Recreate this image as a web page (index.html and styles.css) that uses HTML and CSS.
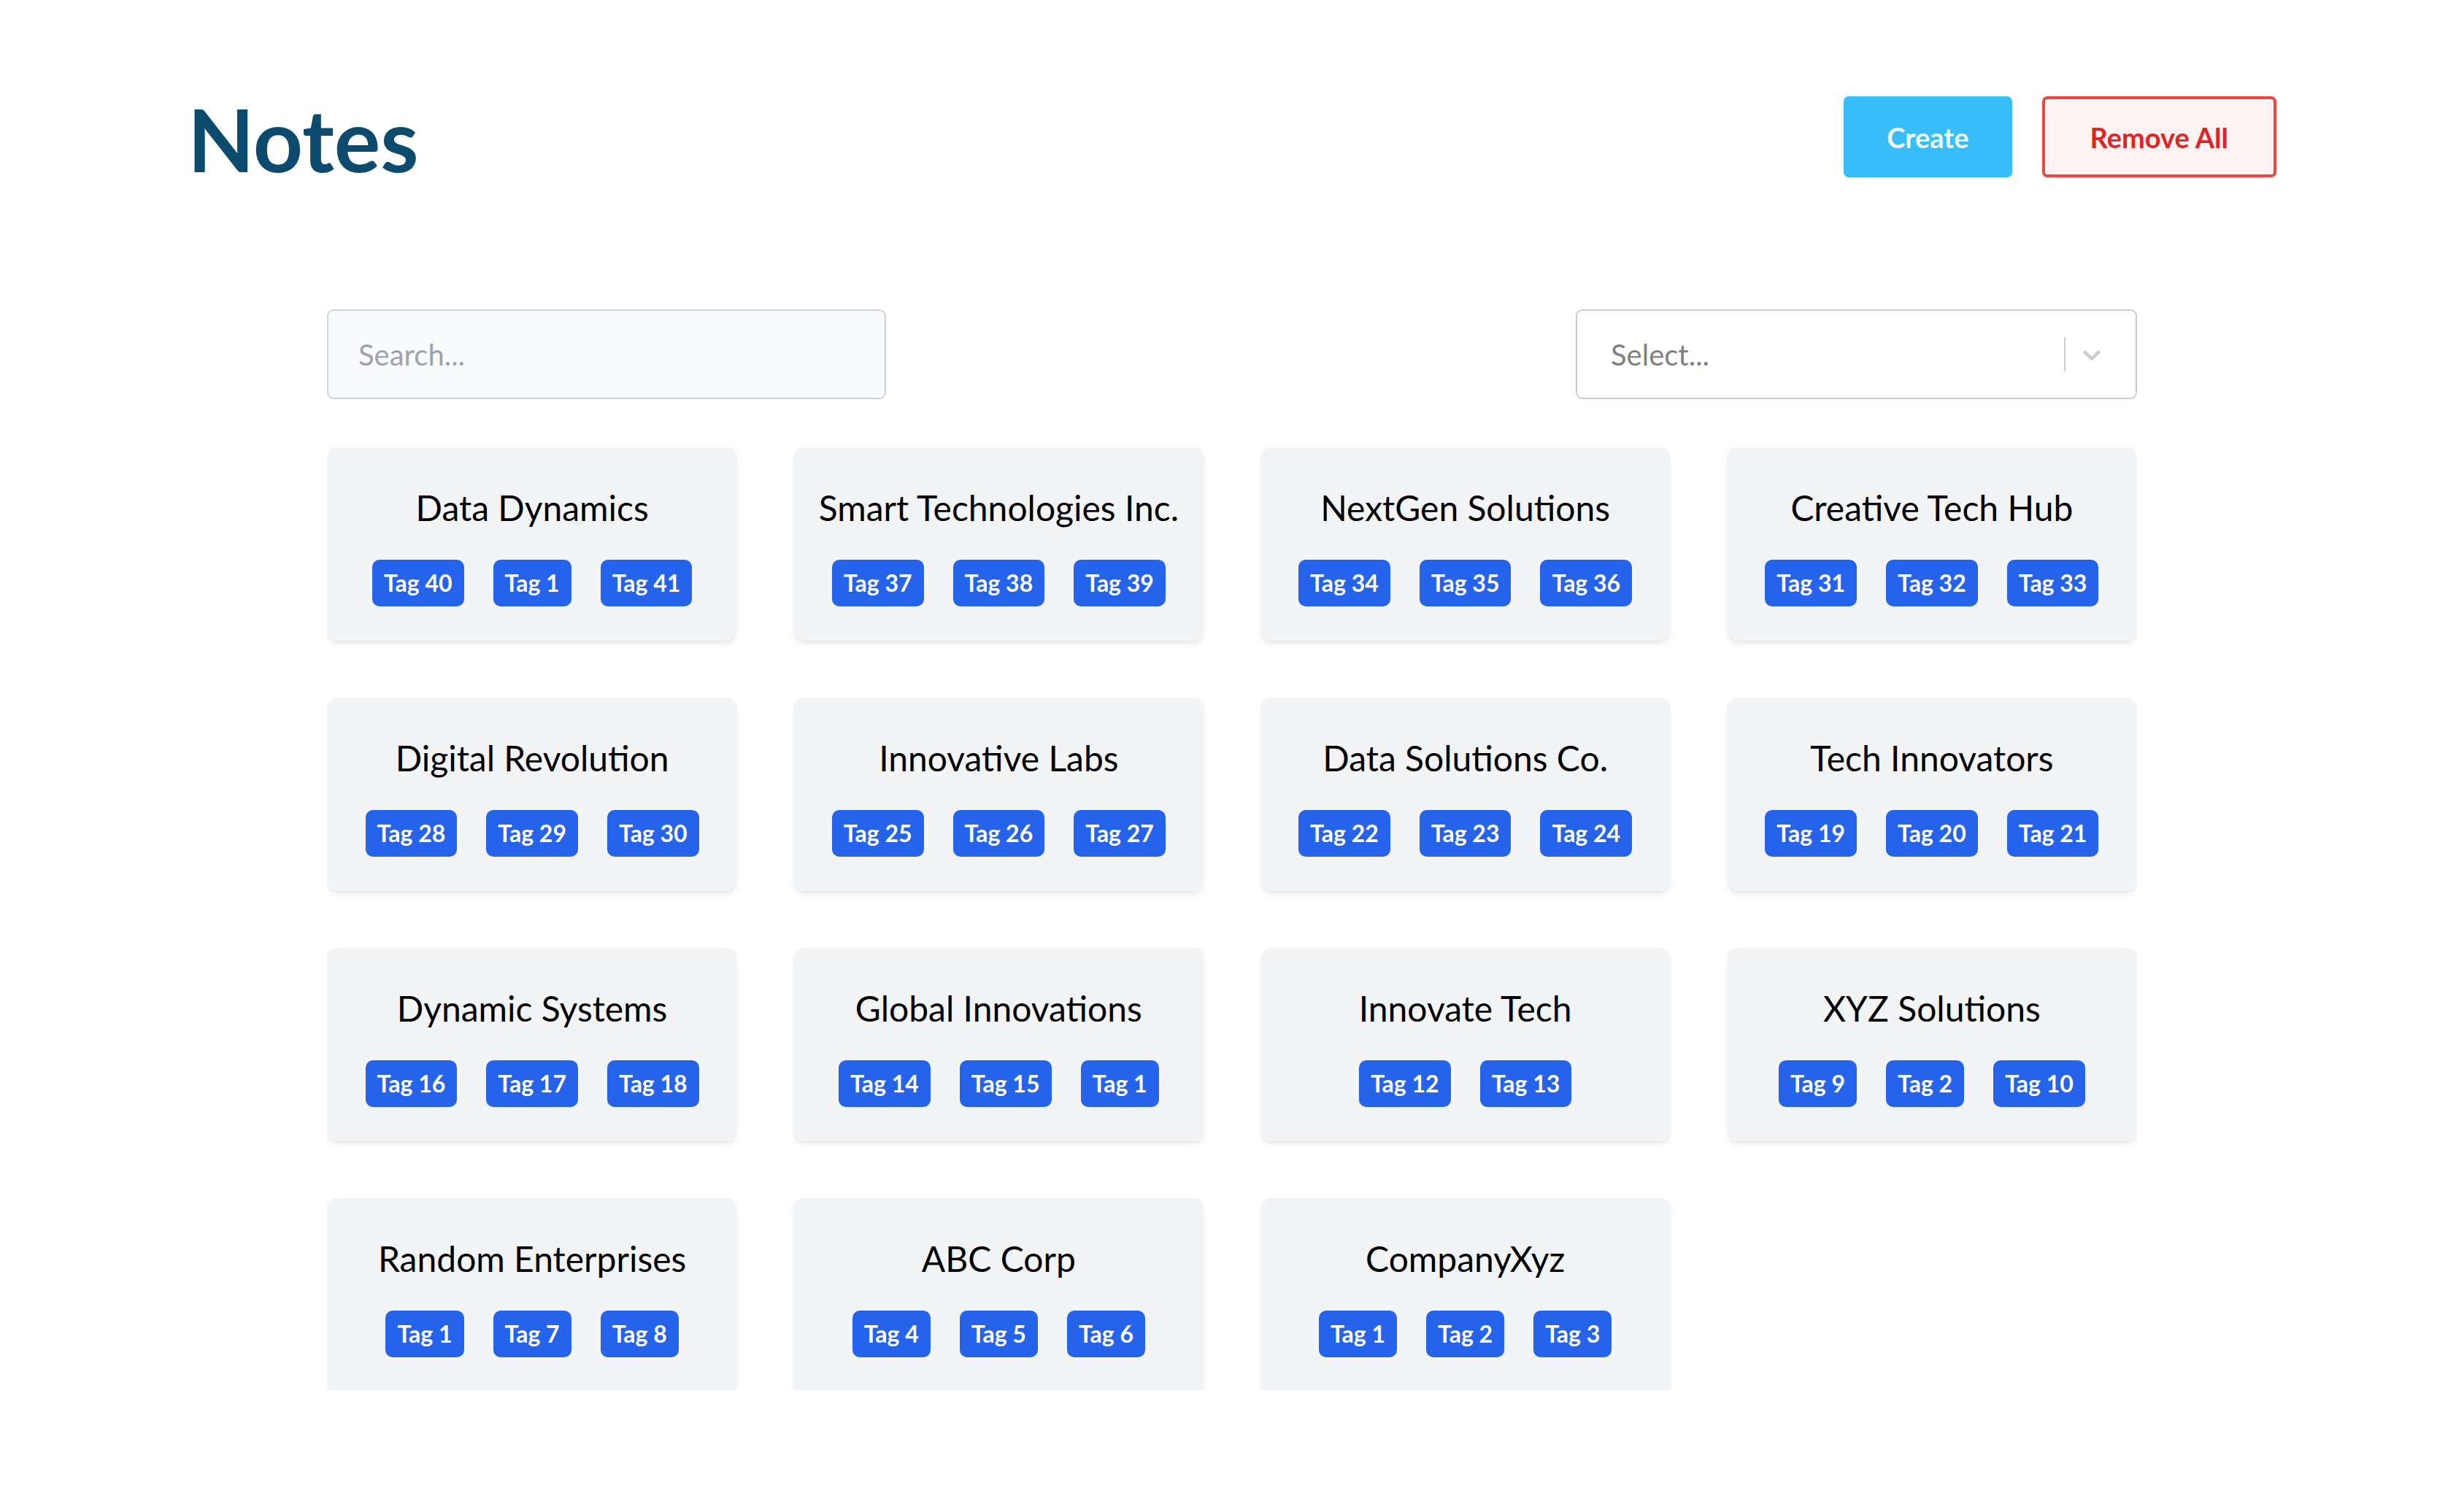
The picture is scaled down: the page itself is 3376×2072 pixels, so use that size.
FILE: index.html
```html
<!DOCTYPE html>
<html lang="en">
<head>
<meta charset="utf-8">
<title>Notes</title>
<link rel="stylesheet" href="styles.css">
</head>
<body>
<header class="header">
  <h1 class="title">Notes</h1>
  <div class="actions">
    <button class="btn btn-create">Create</button>
    <button class="btn btn-remove">Remove All</button>
  </div>
</header>
<main class="main">
  <div class="filters">
    <input class="search" type="text" placeholder="Search...">
    <div class="select">
      <span class="select-placeholder">Select...</span>
      <span class="select-sep"></span>
      <svg class="select-chevron" viewBox="0 0 20 20" width="40" height="40" aria-hidden="true"><path d="M4.516 7.548c0.436-0.446 1.043-0.481 1.576 0l3.908 3.747 3.908-3.747c0.533-0.481 1.141-0.446 1.574 0 0.436 0.445 0.408 1.197 0 1.615-0.406 0.418-4.695 4.502-4.695 4.502-0.217 0.223-0.502 0.335-0.787 0.335s-0.57-0.112-0.789-0.335c0 0-4.287-4.084-4.695-4.502s-0.436-1.17 0-1.615z"/></svg>
    </div>
  </div>
  <div class="grid-wrap">
    <div class="grid">
      <div class="card"><div class="card-title">Data Dynamics</div><div class="tags"><span class="tag">Tag 40</span><span class="tag">Tag 1</span><span class="tag">Tag 41</span></div></div>
      <div class="card"><div class="card-title">Smart Technologies Inc.</div><div class="tags"><span class="tag">Tag 37</span><span class="tag">Tag 38</span><span class="tag">Tag 39</span></div></div>
      <div class="card"><div class="card-title">NextGen Solutions</div><div class="tags"><span class="tag">Tag 34</span><span class="tag">Tag 35</span><span class="tag">Tag 36</span></div></div>
      <div class="card"><div class="card-title">Creative Tech Hub</div><div class="tags"><span class="tag">Tag 31</span><span class="tag">Tag 32</span><span class="tag">Tag 33</span></div></div>
      <div class="card"><div class="card-title">Digital Revolution</div><div class="tags"><span class="tag">Tag 28</span><span class="tag">Tag 29</span><span class="tag">Tag 30</span></div></div>
      <div class="card"><div class="card-title">Innovative Labs</div><div class="tags"><span class="tag">Tag 25</span><span class="tag">Tag 26</span><span class="tag">Tag 27</span></div></div>
      <div class="card"><div class="card-title">Data Solutions Co.</div><div class="tags"><span class="tag">Tag 22</span><span class="tag">Tag 23</span><span class="tag">Tag 24</span></div></div>
      <div class="card"><div class="card-title">Tech Innovators</div><div class="tags"><span class="tag">Tag 19</span><span class="tag">Tag 20</span><span class="tag">Tag 21</span></div></div>
      <div class="card"><div class="card-title">Dynamic Systems</div><div class="tags"><span class="tag">Tag 16</span><span class="tag">Tag 17</span><span class="tag">Tag 18</span></div></div>
      <div class="card"><div class="card-title">Global Innovations</div><div class="tags"><span class="tag">Tag 14</span><span class="tag">Tag 15</span><span class="tag">Tag 1</span></div></div>
      <div class="card"><div class="card-title">Innovate Tech</div><div class="tags"><span class="tag">Tag 12</span><span class="tag">Tag 13</span></div></div>
      <div class="card"><div class="card-title">XYZ Solutions</div><div class="tags"><span class="tag">Tag 9</span><span class="tag">Tag 2</span><span class="tag">Tag 10</span></div></div>
      <div class="card"><div class="card-title">Random Enterprises</div><div class="tags"><span class="tag">Tag 1</span><span class="tag">Tag 7</span><span class="tag">Tag 8</span></div></div>
      <div class="card"><div class="card-title">ABC Corp</div><div class="tags"><span class="tag">Tag 4</span><span class="tag">Tag 5</span><span class="tag">Tag 6</span></div></div>
      <div class="card"><div class="card-title">CompanyXyz</div><div class="tags"><span class="tag">Tag 1</span><span class="tag">Tag 2</span><span class="tag">Tag 3</span></div></div>
    </div>
  </div>
</main>
</body>
</html>
```
FILE: styles.css
```css
* { box-sizing: border-box; }

html, body {
  margin: 0;
  padding: 0;
  background: #ffffff;
  font-family: Lato, "Open Sans", "Noto Sans", sans-serif;
  color: #000;
}

.header {
  display: flex;
  justify-content: space-between;
  align-items: flex-start;
  padding: 131px 257px 0 257px;
}

.title {
  margin: 0;
  font-size: 119px;
  line-height: 119px;
  font-weight: 700;
  color: #0c4a6e;
}

.actions {
  display: flex;
  gap: 41px;
  margin-top: 1px;
}

.btn {
  height: 111px;
  font-family: inherit;
  font-size: 38px;
  font-weight: 700;
  border-radius: 7px;
  cursor: pointer;
}

.btn-create {
  background: #38bdf8;
  color: #f0f9ff;
  border: none;
  padding: 0 59px;
}

.btn-remove {
  background: #fef2f2;
  color: #dc2626;
  border: 4px solid #ef4444;
  padding: 0 62px;
}

.main {
  width: 2480px;
  margin: 174px auto 0 auto;
}

.filters {
  display: flex;
  justify-content: space-between;
  align-items: center;
}

.search {
  width: 766px;
  height: 123px;
  padding: 0 0 0 41px;
  background: #f9fafb;
  border: 2px solid #d1d5db;
  border-radius: 9px;
  font-family: inherit;
  font-size: 40px;
  color: #111827;
  outline: none;
}

.search::placeholder {
  color: #9ca3af;
}

.select {
  width: 769px;
  height: 123px;
  display: flex;
  align-items: center;
  border: 2px solid #cccccc;
  border-radius: 9px;
  background: #fff;
  padding-left: 46px;
}

.select-placeholder {
  flex: 1;
  font-size: 40px;
  color: #808080;
}

.select-sep {
  width: 2px;
  height: 47px;
  background: #cccccc;
}

.select-chevron {
  margin: 0 40px 0 16px;
  fill: #cccccc;
}

.grid-wrap {
  margin-top: 66px;
  height: 1292px;
  overflow: hidden;
}

.grid {
  display: grid;
  grid-template-columns: repeat(4, 1fr);
  column-gap: 77px;
  row-gap: 78px;
}

.card {
  background: #f3f4f6;
  border-radius: 14px;
  padding: 54px 20px 47px 20px;
  box-shadow: 0 6px 10px -3px rgba(0, 0, 0, 0.10), 0 2px 4px -2px rgba(0, 0, 0, 0.06);
  display: flex;
  flex-direction: column;
  align-items: center;
}

.card-title {
  font-size: 48px;
  line-height: 58px;
  font-weight: 400;
  color: #000;
  text-align: center;
  white-space: nowrap;
}

.tags {
  margin-top: 42px;
  display: flex;
  justify-content: center;
  gap: 40px;
}

.tag {
  display: inline-block;
  height: 64px;
  line-height: 64px;
  padding: 0 16px;
  background: #2563eb;
  color: #fff;
  font-size: 32px;
  font-weight: 700;
  border-radius: 10px;
  white-space: nowrap;
}
```
